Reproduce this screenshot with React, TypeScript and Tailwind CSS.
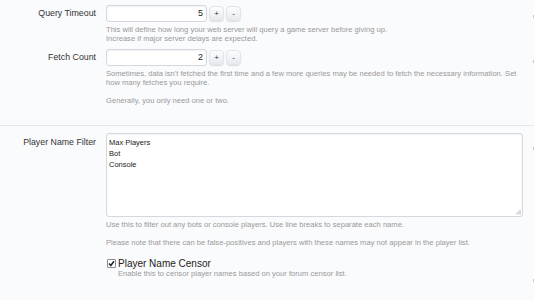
import React from "react";

const font = { fontFamily: '"Liberation Sans", Arial, sans-serif' };

function Spinner({ value }: { value: string }) {
  return (
    <div className="flex items-center h-[17px]">
      <div className="w-[101px] h-[17px] bg-white border border-[#d5d8de] rounded-[3px] shadow-[inset_0_1px_2px_rgba(0,0,0,0.06)] flex items-center justify-end pr-[3px] text-[9px] text-[#222] leading-none">
        {value}
      </div>
      <div className="ml-[2px] w-[15px] h-[15px] rounded-[4px] border border-[#e1e4e9] bg-gradient-to-b from-[#fdfdfe] to-[#e6e9ee] shadow-[0_1px_1px_rgba(0,0,0,0.12)] flex items-center justify-center text-[8px] text-[#333] leading-none">
        +
      </div>
      <div className="ml-[2px] w-[15px] h-[15px] rounded-[4px] border border-[#e1e4e9] bg-gradient-to-b from-[#fdfdfe] to-[#e6e9ee] shadow-[0_1px_1px_rgba(0,0,0,0.12)] flex items-center justify-center text-[8px] text-[#333] leading-none">
        -
      </div>
    </div>
  );
}

function Mark({ top }: { top: string }) {
  return <div className={`w-[1px] h-[3px] bg-[#c8cbd0] ${top}`} />;
}

const explain = "text-[7.6px] leading-[9.5px] text-[#999] whitespace-nowrap";

export default function App() {
  return (
    <div className="w-[534px] h-[300px] bg-[#fafbfd] overflow-hidden" style={font}>
      <div className="pt-[5px] pb-[19px]">
        {/* Query Timeout */}
        <div className="flex">
          <div className="w-[96px] text-right text-[8.8px] leading-[17px] text-[#333]">Query Timeout</div>
          <div className="ml-[10px] flex-1">
            <Spinner value="5" />
            <div className={`mt-[2.5px] ${explain}`}>
              This will define how long your web server will query a game server before giving up.
              <br />
              Increase if major server delays are expected.
            </div>
          </div>
          <Mark top="mt-[10px]" />
        </div>
        {/* Fetch Count */}
        <div className="flex mt-[5.5px]">
          <div className="w-[96px] text-right text-[8.8px] leading-[17px] text-[#333]">Fetch Count</div>
          <div className="ml-[10px] flex-1">
            <Spinner value="2" />
            <div className={`mt-[2.5px] ${explain}`}>
              Sometimes, data isn't fetched the first time and a few more queries may be needed to fetch the necessary information. Set
              <br />
              how many fetches you require.
            </div>
            <div className={`mt-[8.5px] ${explain}`}>Generally, you only need one or two.</div>
          </div>
          <Mark top="mt-[11px]" />
        </div>
      </div>
      <div className="border-t border-[#e3e6eb] pt-[7px]">
        <div className="flex">
          <div className="w-[96px] text-right text-[8.8px] leading-[11px] pt-[4px] text-[#333]">Player Name Filter</div>
          <div className="ml-[10px] flex-1">
            <div className="relative w-[417px] h-[84px] bg-white border border-[#d5d8de] rounded-[3px] shadow-[inset_0_1px_2px_rgba(0,0,0,0.05)] pl-[2px] pt-[3px] text-[7.5px] leading-[11.2px] text-[#222]">
              <div>Max Players</div>
              <div>Bot</div>
              <div>Console</div>
              <svg className="absolute right-[1px] bottom-[1px]" width="6" height="6" viewBox="0 0 6 6">
                <rect x="4.5" y="0.5" width="1" height="5" fill="#b0b3b8" />
                <rect x="2.5" y="2.5" width="1" height="3" fill="#b0b3b8" />
                <rect x="0.5" y="4.5" width="1" height="1" fill="#b0b3b8" />
              </svg>
            </div>
            <div className={`mt-[3.5px] ${explain}`}>
              Use this to filter out any bots or console players. Use line breaks to separate each name.
            </div>
            <div className={`mt-[8.8px] ${explain}`}>
              Please note that there can be false-positives and players with these names may not appear in the player list.
            </div>
            <div className="mt-[10px] flex items-center">
              <div className="w-[9px] h-[9px] ml-[1px] bg-white border border-[#8a8d92] rounded-[1px] flex items-center justify-center">
                <svg width="7" height="7" viewBox="0 0 7 7">
                  <path d="M1 3.6 L2.8 5.5 L6 1.3" stroke="#222" strokeWidth="1.5" fill="none" />
                </svg>
              </div>
              <div className="ml-[2px] text-[10px] leading-[11px] text-[#222]">Player Name Censor</div>
            </div>
            <div className={`ml-[12px] ${explain}`}>
              Enable this to censor player names based on your forum censor list.
            </div>
          </div>
          <div className="flex flex-col">
            <Mark top="mt-[14px]" />
            <Mark top="mt-[129px]" />
          </div>
        </div>
      </div>
    </div>
  );
}
